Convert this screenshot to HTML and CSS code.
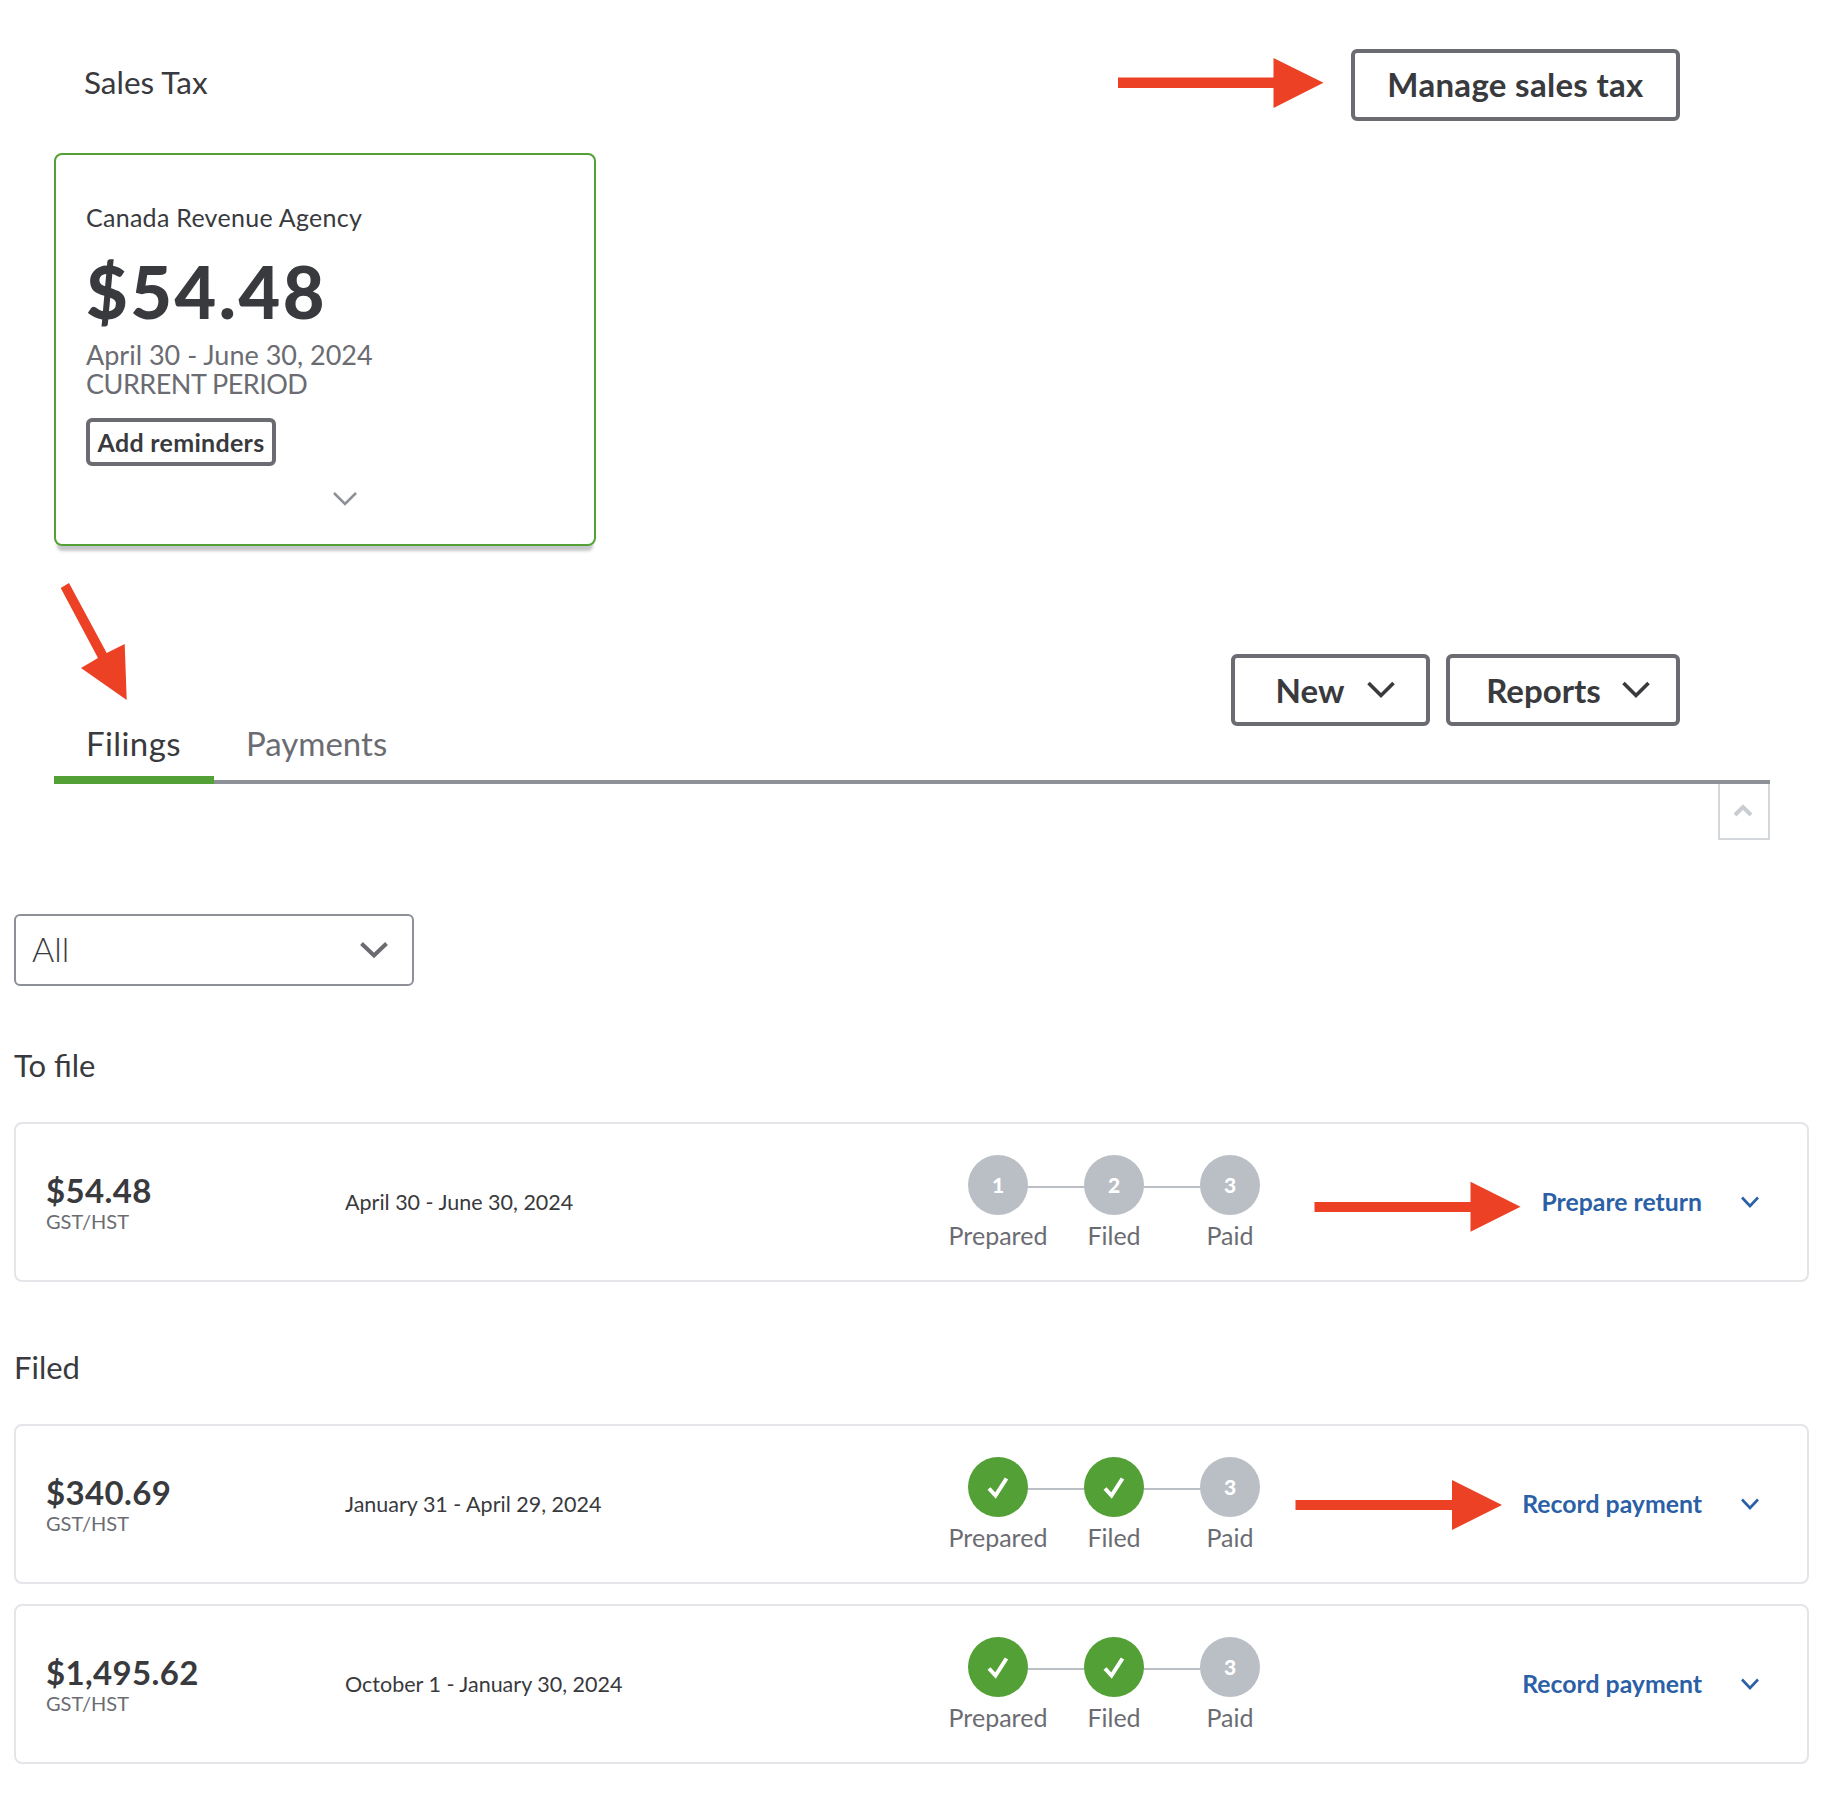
FILE: index.html
```html
<!DOCTYPE html>
<html lang="en">
<head>
<meta charset="utf-8">
<title>Sales Tax</title>
<link rel="stylesheet" href="styles.css">
</head>
<body>
<div class="page">
  <header class="topbar">
    <h1 class="page-title">Sales Tax</h1>
    <button class="btn btn-manage">Manage sales tax</button>
  </header>

  <section class="agency-card">
    <div class="agency-name">Canada Revenue Agency</div>
    <div class="agency-amount">$54.48</div>
    <div class="agency-period">April 30 - June 30, 2024<br><span class="agency-current">CURRENT PERIOD</span></div>
    <button class="btn-small">Add reminders</button>
    <svg class="agency-chevron" width="26" height="16" viewBox="0 0 26 16"><path d="M2 2l11 11L24 2" fill="none" stroke="#8d9096" stroke-width="2.6"/></svg>
  </section>

  <nav class="tabbar">
    <div class="tabs">
      <div class="tab tab-active">Filings</div>
      <div class="tab">Payments</div>
    </div>
    <div class="tab-actions">
      <button class="btn btn-new">New<svg width="30" height="20" viewBox="0 0 30 20"><path d="M2.5 3L15 15.5 27.5 3" fill="none" stroke="#393a3d" stroke-width="3.6"/></svg></button>
      <button class="btn btn-reports">Reports<svg width="30" height="20" viewBox="0 0 30 20"><path d="M2.5 3L15 15.5 27.5 3" fill="none" stroke="#393a3d" stroke-width="3.6"/></svg></button>
    </div>
  </nav>
  <div class="collapse-wrap">
    <div class="collapse-box"><svg width="20" height="14" viewBox="0 0 20 14"><path d="M2 12l8-8 8 8" fill="none" stroke="#c9ccd2" stroke-width="4"/></svg></div>
  </div>

  <main class="content">
    <div class="select">
      <span class="select-value">All</span>
      <svg width="30" height="20" viewBox="0 0 30 20"><path d="M2.5 3.500L15 15.500 27.500 3.500" fill="none" stroke="#6b6c72" stroke-width="4"/></svg>
    </div>

    <h2 class="group-title title-tofile">To file</h2>
    <article class="row">
      <div class="amount-col"><div class="amount">$54.48</div><div class="tax-type">GST/HST</div></div>
      <div class="period">April 30 - June 30, 2024</div>
      <div class="steps">
        <div class="step"><span class="dot">1</span><span class="step-label">Prepared</span></div>
        <div class="step"><span class="dot">2</span><span class="step-label">Filed</span></div>
        <div class="step"><span class="dot">3</span><span class="step-label">Paid</span></div>
      </div>
      <div class="action"><a class="action-link">Prepare return</a><svg width="20" height="14" viewBox="0 0 20 14"><path d="M2 2.500l8 8.500 8-8.500" fill="none" stroke="#2b5fa6" stroke-width="2.600"/></svg></div>
    </article>

    <h2 class="group-title title-filed">Filed</h2>
    <article class="row">
      <div class="amount-col"><div class="amount">$340.69</div><div class="tax-type">GST/HST</div></div>
      <div class="period">January 31 - April 29, 2024</div>
      <div class="steps">
        <div class="step"><span class="dot dot-done"><svg width="24" height="24" viewBox="0 0 24 24"><path d="M3 13.500l6.500 7L20.500 3.500" fill="none" stroke="#fff" stroke-width="4"/></svg></span><span class="step-label">Prepared</span></div>
        <div class="step"><span class="dot dot-done"><svg width="24" height="24" viewBox="0 0 24 24"><path d="M3 13.500l6.500 7L20.500 3.500" fill="none" stroke="#fff" stroke-width="4"/></svg></span><span class="step-label">Filed</span></div>
        <div class="step"><span class="dot">3</span><span class="step-label">Paid</span></div>
      </div>
      <div class="action"><a class="action-link">Record payment</a><svg width="20" height="14" viewBox="0 0 20 14"><path d="M2 2.500l8 8.500 8-8.500" fill="none" stroke="#2b5fa6" stroke-width="2.600"/></svg></div>
    </article>
    <article class="row row-next">
      <div class="amount-col"><div class="amount">$1,495.62</div><div class="tax-type">GST/HST</div></div>
      <div class="period">October 1 - January 30, 2024</div>
      <div class="steps">
        <div class="step"><span class="dot dot-done"><svg width="24" height="24" viewBox="0 0 24 24"><path d="M3 13.500l6.500 7L20.500 3.500" fill="none" stroke="#fff" stroke-width="4"/></svg></span><span class="step-label">Prepared</span></div>
        <div class="step"><span class="dot dot-done"><svg width="24" height="24" viewBox="0 0 24 24"><path d="M3 13.500l6.500 7L20.500 3.500" fill="none" stroke="#fff" stroke-width="4"/></svg></span><span class="step-label">Filed</span></div>
        <div class="step"><span class="dot">3</span><span class="step-label">Paid</span></div>
      </div>
      <div class="action"><a class="action-link">Record payment</a><svg width="20" height="14" viewBox="0 0 20 14"><path d="M2 2.500l8 8.500 8-8.500" fill="none" stroke="#2b5fa6" stroke-width="2.600"/></svg></div>
    </article>
  </main>

  <svg class="annotations" width="1822" height="1812" viewBox="0 0 1822 1812">
    <polygon points="1118,77.500 1273.500,77.500 1273.500,58 1323.500,82.700 1273.500,108 1273.500,88 1118,88"/>
    <polygon points="60.700,588 69,583 106.700,653 124.700,644 126.700,700 81,668 98,658"/>
    <polygon points="1314.500,1202 1470.500,1202 1470.500,1181.700 1520.500,1206.700 1470.500,1231.700 1470.500,1212 1314.500,1212"/>
    <polygon points="1295.500,1500 1452,1500 1452,1480 1502,1505 1452,1530 1452,1510 1295.500,1510"/>
  </svg>
</div>
</body>
</html>
```
FILE: styles.css
```css
* { box-sizing: border-box; }
html, body { margin: 0; padding: 0; background: #fff; }
body { font-family: Lato, "Open Sans", sans-serif; color: #393a3d; }
.page { position: relative; width: 1822px; height: 1812px; overflow: hidden; }

.topbar { display: flex; justify-content: space-between; align-items: center; padding: 49px 142px 0 84px; }
.page-title { margin: 0 0 6px; font-size: 31.500px; font-weight: 400; line-height: 40px; }

.btn { display: flex; align-items: center; justify-content: center; background: #fff; border: 4px solid #6b6c72; border-radius: 6px; height: 72px; padding: 0; font: 700 33px Lato, sans-serif; color: #393a3d; }
.btn-manage { width: 329px; padding-bottom: 2px; letter-spacing: .3px; }
.btn-new { width: 199px; gap: 22px; padding-left: 11px; margin-left: 1px; }
.btn-reports { width: 234px; gap: 20px; padding-left: 11px; }

.agency-card { position: relative; width: 542px; height: 393px; margin: 32px 0 0 54px; padding: 46px 30px 0; border: 2px solid #53a136; border-radius: 8px; box-shadow: 0 8px 3px -3px rgba(141, 144, 150, .5); }
.agency-name { font-size: 25px; line-height: 32px; letter-spacing: .28px; }
.agency-amount { margin-top: 14px; font-size: 72px; line-height: 88px; font-weight: 900; letter-spacing: 2.500px; }
.agency-period { margin-top: 5px; font-size: 27px; line-height: 29px; color: #6b6c72; }
.agency-current { letter-spacing: -.5px; }
.btn-small { display: block; margin-top: 20px; width: 190px; height: 48px; padding: 0; background: #fff; border: 4px solid #6b6c72; border-radius: 6px; font: 700 25px Lato, sans-serif; letter-spacing: .3px; color: #393a3d; }
.agency-chevron { display: block; margin: 25px 0 0 246px; }

.tabbar { display: flex; justify-content: space-between; width: 1716px; height: 130px; margin: 108px 0 0 54px; padding-right: 90px; border-bottom: 4px solid #8d9096; }
.tabs { display: flex; align-self: flex-end; margin-bottom: -4px; }
.tab { padding: 0 32px; height: 68px; font-size: 33px; line-height: 55px; color: #6b6c72; }
.tab-active { width: 160px; color: #393a3d; border-bottom: 8px solid #53a136; letter-spacing: .4px; }
.tab-actions { display: flex; gap: 16px; align-self: flex-start; }

.collapse-wrap { display: flex; justify-content: flex-end; width: 1770px; }
.collapse-box { display: flex; justify-content: center; padding: 19px 2px 0 0; width: 52px; height: 56px; border: 2px solid #d4d7dc; border-top: 0; }
.collapse-box svg { display: block; }

.content { padding: 74px 13px 0 14px; }
.select { display: flex; align-items: center; justify-content: space-between; width: 400px; height: 72px; padding: 0 23px 0 16px; border: 2px solid #8d9096; border-radius: 6px; font-size: 34px; font-weight: 300; color: #393a3d; }
.select-value { margin-top: -4px; }

.group-title { margin: 0; font-size: 31px; font-weight: 400; line-height: 40px; }
.title-tofile { margin-top: 59px; }
.title-filed { margin-top: 65px; }

.row { display: grid; grid-template-columns: 299px 595px 348px 1fr; align-items: center; height: 160px; margin-top: 37px; padding: 0 47px 0 30px; border: 2px solid #e3e5e8; border-radius: 8px; }
.row-next { margin-top: 20px; }
.amount { margin-bottom: 2px; font-size: 33px; line-height: 36px; font-weight: 700; letter-spacing: .35px; }
.tax-type { font-size: 20px; line-height: 22px; color: #6b6c72; }
.period { font-size: 21.500px; }

.steps { display: flex; height: 100px; margin-top: 5px; }
.step { position: relative; display: flex; flex-direction: column; align-items: center; width: 116px; }
.step + .step::before { content: ""; position: absolute; top: 31px; left: -58px; width: 116px; height: 2px; background: #babec5; }
.dot { position: relative; z-index: 1; display: flex; align-items: center; justify-content: center; width: 60px; height: 60px; border-radius: 50%; background: #babec5; color: #fff; font-size: 21px; font-weight: 900; }
.dot-done { background: #53a136; }
.step-label { margin-top: 2px; font-size: 25px; line-height: 36px; color: #6b6c72; }

.action { display: flex; align-items: center; justify-content: flex-end; gap: 38px; margin-top: -1px; }
.action-link { font-size: 24.800px; font-weight: 700; color: #2b5fa6; }

.annotations { position: absolute; top: 0; left: 0; z-index: 2; pointer-events: none; }
.annotations polygon { fill: #ec4124; }
```
